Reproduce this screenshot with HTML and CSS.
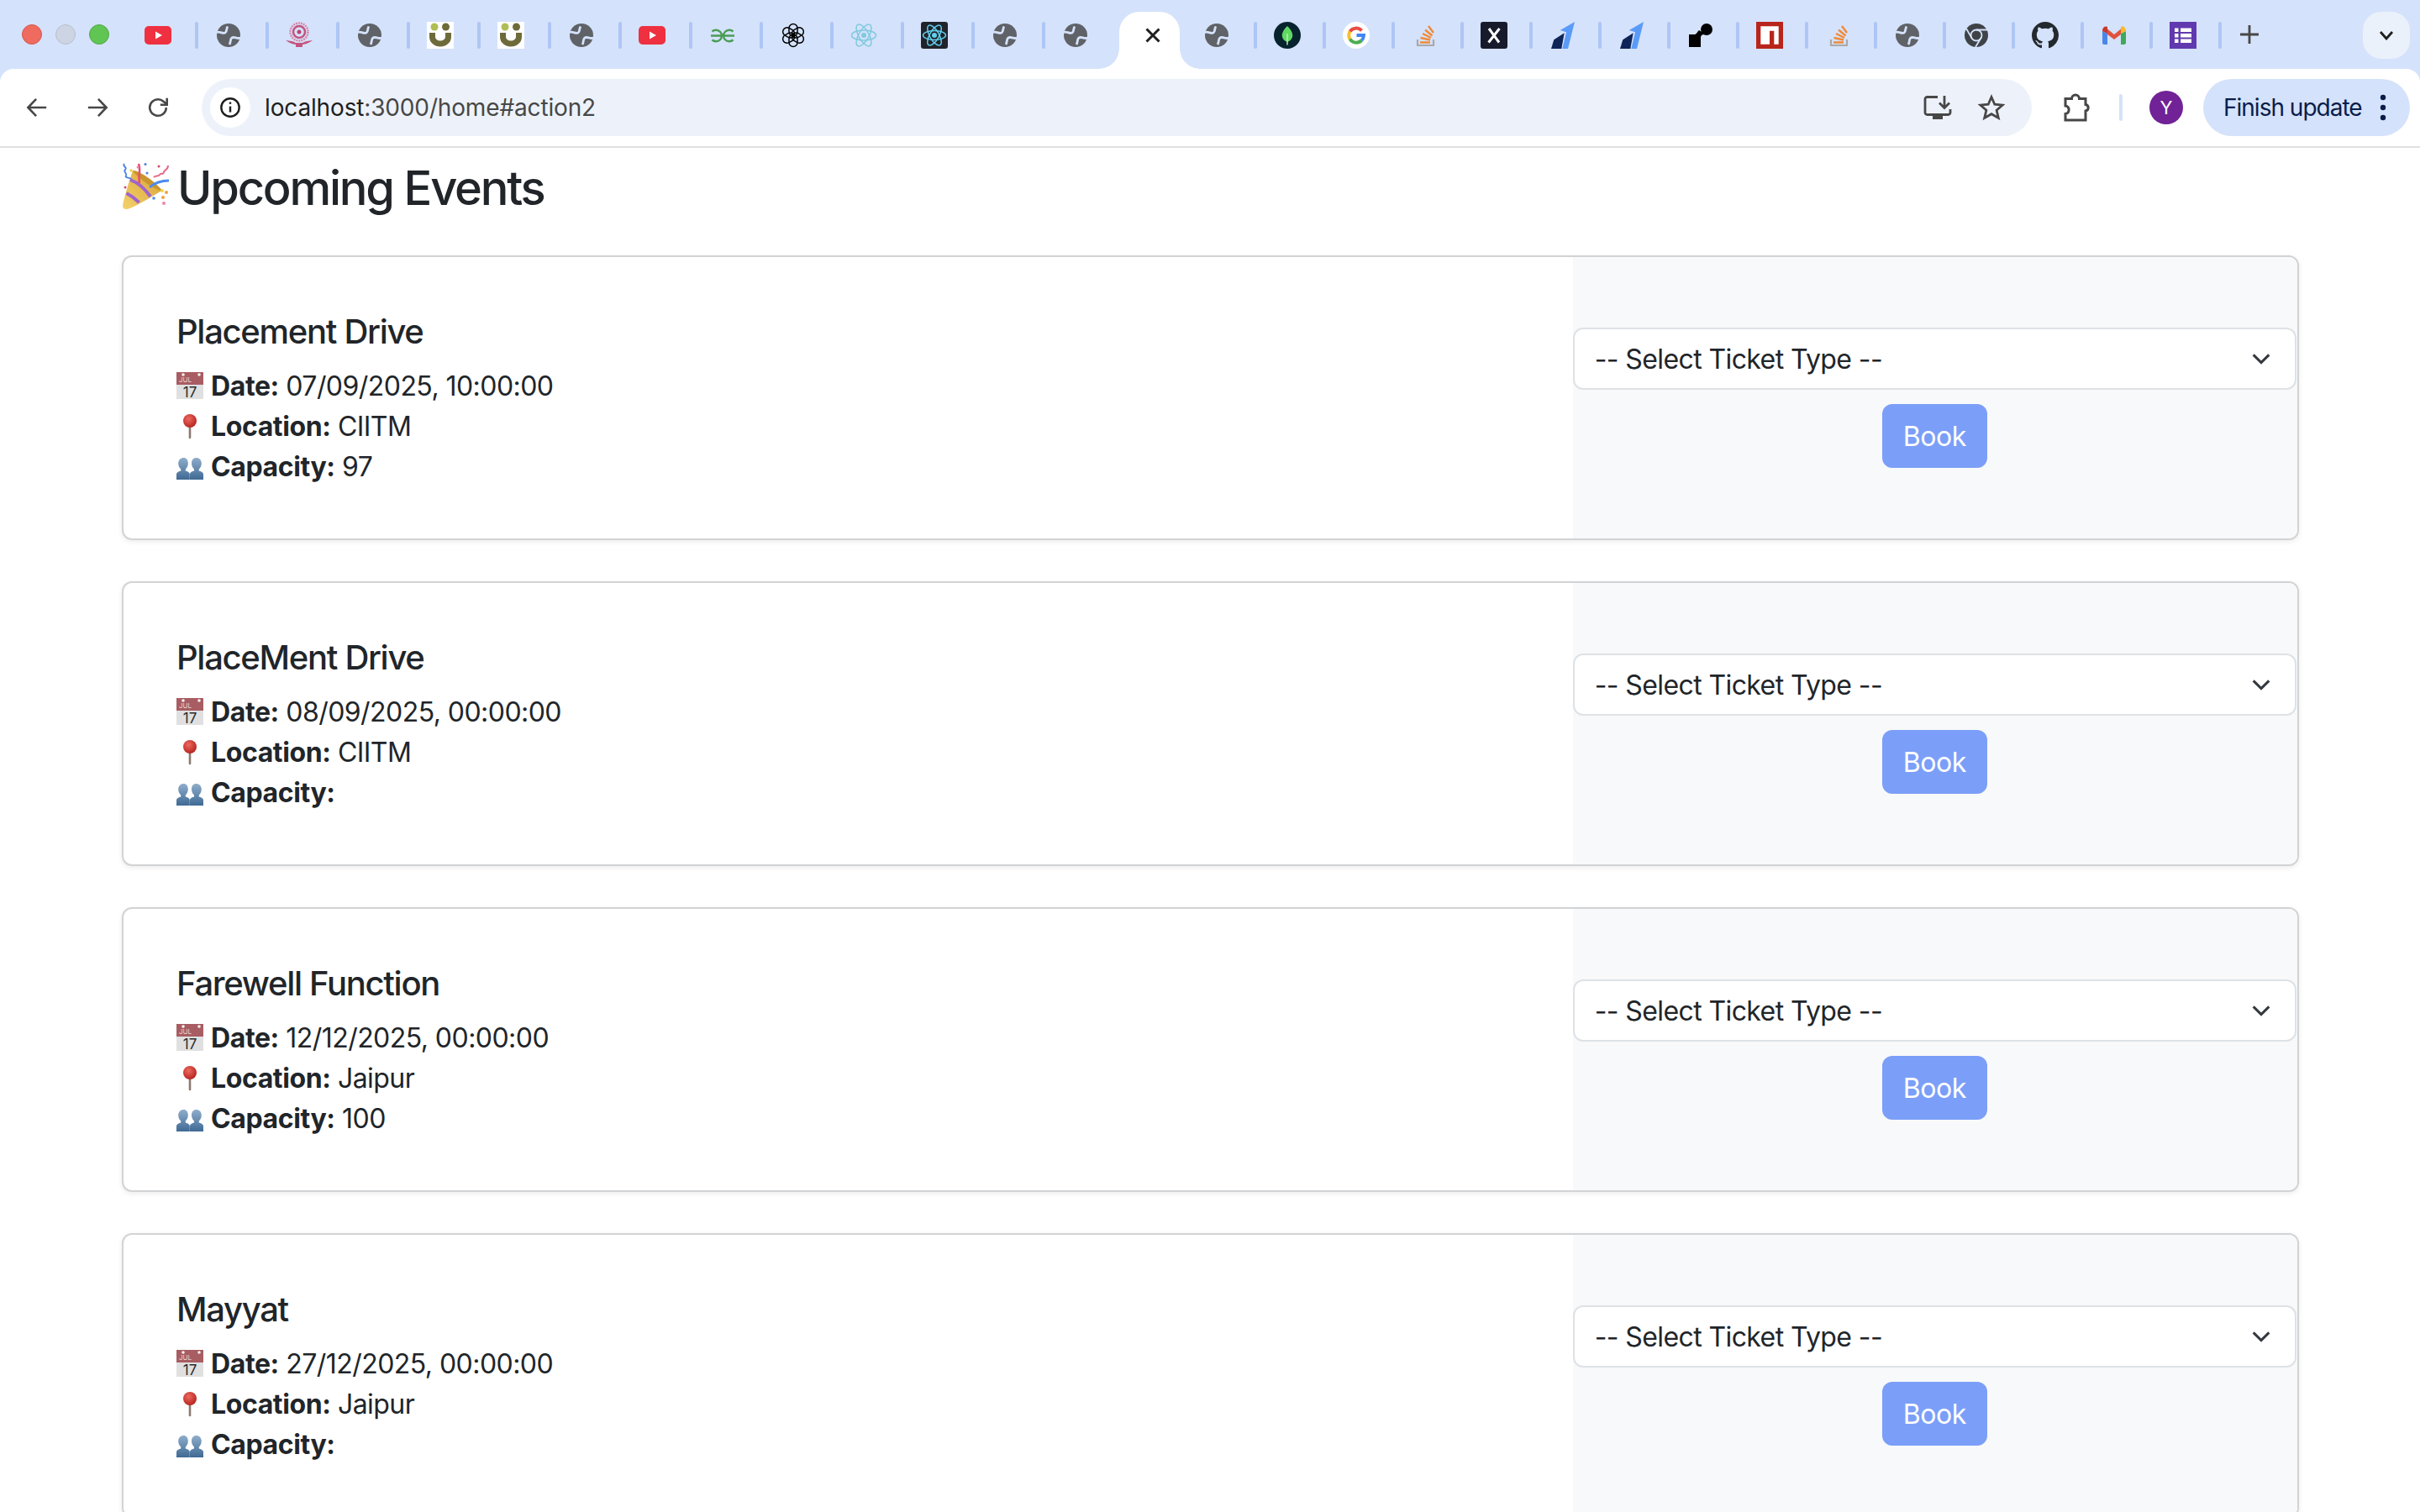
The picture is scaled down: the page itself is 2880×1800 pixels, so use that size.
FILE: index.html
```html
<!DOCTYPE html>
<html lang="en">
<head>
<meta charset="utf-8">
<title>Upcoming Events</title>
<link rel="stylesheet" href="styles.css">
</head>
<body>
<svg class="defs" width="0" height="0" aria-hidden="true">
  <defs>
    <linearGradient id="people" x1="0" y1="0" x2="0" y2="1"><stop offset="0" stop-color="#8fadcb"/><stop offset="1" stop-color="#3f6a94"/></linearGradient>
    <radialGradient id="ball" cx=".4" cy=".35" r=".7"><stop offset="0" stop-color="#ee6a60"/><stop offset="1" stop-color="#b3201c"/></radialGradient>
    <linearGradient id="gold" x1="0" y1="1" x2="1" y2="0"><stop offset="0" stop-color="#f3d36c"/><stop offset="1" stop-color="#d9a033"/></linearGradient>
  </defs>
  <symbol id="i-globe" viewBox="0 0 32 32"><circle cx="16" cy="16" r="14" fill="#5f6368"/><path d="M1 12.500C6 11 9 14.500 12 13c2.500-1.500 1-5 3-7.500" fill="none" stroke="#d5e2fb" stroke-width="2.800"/><path d="M31 19c-5 2-8-2-11 0-2.500 1.500-1 5-3 8" fill="none" stroke="#d5e2fb" stroke-width="2.800"/></symbol>
  <symbol id="i-yt" viewBox="0 0 32 32"><rect x="0" y="5" width="32" height="22" rx="5" fill="#ee3040"/><path d="M13 11.500l8 4.500-8 4.500z" fill="#fff"/></symbol>
  <symbol id="i-seal" viewBox="0 0 32 32"><circle cx="16" cy="12" r="10.500" fill="none" stroke="#d58aa8" stroke-width="2.500" stroke-dasharray="2 1"/><circle cx="16" cy="12" r="7" fill="none" stroke="#c4537f" stroke-width="2.500"/><circle cx="16" cy="12" r="2.500" fill="#b8446f"/><path d="M0 22c5 .5 9 1 12 3h8c3-2 7-2.500 12-3-4 3-8 4.500-12 5v3h-8v-3c-4-.5-8-2-12-5z" fill="#c4537f"/></symbol>
  <symbol id="i-u" viewBox="0 0 32 32"><rect width="32" height="32" fill="#fff"/><path d="M6.500 13v5a9.500 8 0 0 0 19 0v-5" fill="none" stroke="#6e6b3b" stroke-width="7"/><circle cx="9" cy="6" r="4.500" fill="#b0bd54"/><circle cx="22.500" cy="6" r="4.500" fill="#6e6b3b"/></symbol>
  <symbol id="i-gfg" viewBox="0 0 32 32" ><g fill="none" stroke="#4a9c55" stroke-width="2.400"><path d="M2 16.500H15.500M3.500 11.500A6.800 6.800 0 1 1 3.500 21.500"/><path d="M30 16.500H16.500M28.500 11.500A6.800 6.800 0 1 0 28.500 21.500"/></g></symbol>
  <symbol id="i-ai" viewBox="0 0 32 32"><g fill="none" stroke="#000" stroke-width="1.500"><rect x="11" y="2.500" width="10" height="14.500" rx="5"/><rect x="11" y="2.500" width="10" height="14.500" rx="5" transform="rotate(60 16 16)"/><rect x="11" y="2.500" width="10" height="14.500" rx="5" transform="rotate(120 16 16)"/><rect x="11" y="2.500" width="10" height="14.500" rx="5" transform="rotate(180 16 16)"/><rect x="11" y="2.500" width="10" height="14.500" rx="5" transform="rotate(240 16 16)"/><rect x="11" y="2.500" width="10" height="14.500" rx="5" transform="rotate(300 16 16)"/></g></symbol>
  <symbol id="i-react" viewBox="0 0 32 32"><g fill="none" stroke="#7fc9df" stroke-width="1.500"><ellipse cx="16" cy="16" rx="14.500" ry="6"/><ellipse cx="16" cy="16" rx="14.500" ry="6" transform="rotate(60 16 16)"/><ellipse cx="16" cy="16" rx="14.500" ry="6" transform="rotate(120 16 16)"/></g><circle cx="16" cy="16" r="3" fill="#7fc9df"/></symbol>
  <symbol id="i-reactd" viewBox="0 0 32 32"><rect width="32" height="32" rx="3" fill="#20232a"/><g fill="none" stroke="#61cfee" stroke-width="1.500"><ellipse cx="16" cy="16" rx="13.500" ry="5.500"/><ellipse cx="16" cy="16" rx="13.500" ry="5.500" transform="rotate(60 16 16)"/><ellipse cx="16" cy="16" rx="13.500" ry="5.500" transform="rotate(120 16 16)"/></g><circle cx="16" cy="16" r="3" fill="#61cfee"/></symbol>
  <symbol id="i-mongo" viewBox="0 0 32 32"><circle cx="16" cy="16" r="16" fill="#06232e"/><path d="M16 5c5 5 7 9 6 13-.7 3-3 5-6 6-3-1-5.300-3-6-6-1-4 1-8 6-13z" fill="#5fd862"/><path d="M16 14v13.500" stroke="#b6efae" stroke-width="1.500"/></symbol>
  <symbol id="i-g" viewBox="0 0 32 32"><circle cx="16" cy="16" r="16" fill="#fff"/><g fill="none" stroke-width="4"><path d="M22.500 10.500A9 9 0 0 0 8.500 11.500" stroke="#ea4c43"/><path d="M8.500 11.500A9 9 0 0 0 8.500 20.500" stroke="#f9c02c"/><path d="M8.500 20.500A9 9 0 0 0 22.500 22" stroke="#4cae50"/><path d="M22.500 22A9 9 0 0 0 25 16H16.500" stroke="#4285f4"/></g></symbol>
  <symbol id="i-so" viewBox="0 0 32 32"><path d="M7 21v7h19v-7" fill="none" stroke="#a9a9a9" stroke-width="2.200"/><g stroke="#ef8a3a" stroke-width="2.400"><path d="M10 24.500h12M10.500 19l11.500 2.500M13 14l10 5M16 9.500l8.500 7M20 5l6 8"/></g></symbol>
  <symbol id="i-x" viewBox="0 0 32 32"><rect width="32" height="32" rx="3" fill="#171a2b"/><path d="M10 8l12 16.500M22.500 8L9.500 24.500" stroke="#fff" stroke-width="3"/></symbol>
  <symbol id="i-arrow" viewBox="0 0 32 32"><path d="M12.700 10L30 0l-8 32h-6.700L20 12.300z" fill="#5b9bf8"/><path d="M2 32l3.300-10.700L17.700 13.300 14.300 32z" fill="#0f2557"/></symbol>
  <symbol id="i-blob" viewBox="0 0 32 32"><circle cx="23" cy="9" r="7"/><path d="M2 15h6c3 0 3-2 6-5l8 5c-3 0-6 0-6 4v11H2z"/></symbol>
  <symbol id="i-npm" viewBox="0 0 32 32"><rect width="32" height="32" fill="#b8251b"/><path d="M5.300 5.300h21.400v21.400H21.300V10.700h-5.300v16H5.300z" fill="#fff"/></symbol>
  <symbol id="i-chrome" viewBox="0 0 32 32"><circle cx="16" cy="16" r="14" fill="#3f4347"/><circle cx="16" cy="16" r="6.500" fill="none" stroke="#d5e2fb" stroke-width="1.800"/><path d="M16 9.500h13.500M10.500 19.300L4 8M21.500 19.300L15 30" stroke="#d5e2fb" stroke-width="1.800" fill="none"/></symbol>
  <symbol id="i-gh" viewBox="0 0 16 16"><path fill="#24292e" d="M8 0C3.580 0 0 3.580 0 8c0 3.540 2.290 6.530 5.470 7.590.4.070.55-.17.55-.38 0-.19-.01-.82-.01-1.490-2.010.37-2.530-.49-2.690-.94-.09-.23-.48-.94-.82-1.130-.28-.15-.68-.52-.01-.53.63-.01 1.080.58 1.230.82.72 1.210 1.870.87 2.330.66.07-.52.28-.87.51-1.070-1.780-.2-3.640-.89-3.640-3.950 0-.87.31-1.590.82-2.150-.08-.2-.36-1.020.08-2.120 0 0 .67-.21 2.200.82.64-.18 1.320-.27 2-.27.68 0 1.360.09 2 .27 1.530-1.040 2.200-.82 2.200-.82.44 1.100.16 1.920.08 2.120.51.56.82 1.270.82 2.150 0 3.070-1.870 3.750-3.650 3.950.29.25.54.73.54 1.480 0 1.070-.01 1.930-.01 2.200 0 .21.15.46.55.38A8.013 8.013 0 0 0 16 8c0-4.420-3.580-8-8-8z"/></symbol>
  <symbol id="i-gm" viewBox="0 0 32 32"><path d="M2 11v14a2 2 0 0 0 2 2h4V14z" fill="#4a86e8"/><path d="M30 11v14a2 2 0 0 1-2 2h-4V14z" fill="#40a85a"/><path d="M8 8.500L16 15l8-6.500V15l-8 6-8-6z" fill="#e0523f"/><path d="M2 11c0-5 4-6.500 6-5v8z" fill="#c5392f"/><path d="M30 11c0-5-4-6.500-6-5v8z" fill="#f5bb2a"/></symbol>
  <symbol id="i-forms" viewBox="0 0 32 32"><rect width="32" height="32" fill="#6139ae"/><path d="M6 7.500h4.500V12H6zM13 7.500h13V12H13zM6 14h4.500v4.500H6zM13 14h13v4.500H13zM6 20.500h4.500V25H6zM13 20.500h13V25H13z" fill="#fff"/></symbol>
  <symbol id="e-pin" viewBox="0 0 32 32"><path d="M16 14v16" stroke="#8b7a70" stroke-width="2.600" stroke-linecap="round"/><circle cx="16" cy="10" r="8" fill="url(#ball)"/></symbol>
  <symbol id="e-ppl" viewBox="0 0 32 32"><g fill="url(#people)"><path d="M8.500 6c3.300 0 5.300 2.700 5.300 6.500 0 3-1.300 5.700-3 6.700v2.300c3.500 1 5 2 5 4V32H0v-6.500c0-2 1.700-3 5.200-4v-2.300c-1.700-1-3-3.700-3-6.700C2.200 8.700 5 6 8.500 6z"/><path d="M23.500 6c3.500 0 6.300 2.700 6.300 6.500 0 3-1.300 5.700-3 6.700v2.300c3.500 1 5.200 2 5.200 4V32H16v-6.500c0-2 1.500-3 5-4v-2.300c-1.700-1-3-3.700-3-6.700 0-3.800 2.200-6.500 5.500-6.500z"/></g></symbol>
</svg>

<div class="browser">
  <div class="strip">
    <div class="lights"><span class="light red"></span><span class="light gray"></span><span class="light green"></span></div>
    <div class="tabs">
      <div class="tab"><svg class="fav"><use href="#i-yt"/></svg></div>
      <div class="tab"><svg class="fav"><use href="#i-globe"/></svg></div>
      <div class="tab"><svg class="fav"><use href="#i-seal"/></svg></div>
      <div class="tab"><svg class="fav"><use href="#i-globe"/></svg></div>
      <div class="tab"><svg class="fav"><use href="#i-u"/></svg></div>
      <div class="tab"><svg class="fav"><use href="#i-u"/></svg></div>
      <div class="tab"><svg class="fav"><use href="#i-globe"/></svg></div>
      <div class="tab"><svg class="fav"><use href="#i-yt"/></svg></div>
      <div class="tab"><svg class="fav"><use href="#i-gfg"/></svg></div>
      <div class="tab"><svg class="fav"><use href="#i-ai"/></svg></div>
      <div class="tab"><svg class="fav"><use href="#i-react"/></svg></div>
      <div class="tab"><svg class="fav"><use href="#i-reactd"/></svg></div>
      <div class="tab"><svg class="fav"><use href="#i-globe"/></svg></div>
      <div class="tab plain"><svg class="fav"><use href="#i-globe"/></svg></div>
      <div class="tab-active"><svg class="close" viewBox="0 0 16 16"><path d="M2 2l12 12M14 2L2 14"/></svg></div>
      <div class="tab after-active"><svg class="fav"><use href="#i-globe"/></svg></div>
      <div class="tab narrow"><svg class="fav"><use href="#i-mongo"/></svg></div>
      <div class="tab narrow"><svg class="fav"><use href="#i-g"/></svg></div>
      <div class="tab narrow"><svg class="fav"><use href="#i-so"/></svg></div>
      <div class="tab narrow"><svg class="fav"><use href="#i-x"/></svg></div>
      <div class="tab narrow"><svg class="fav"><use href="#i-arrow"/></svg></div>
      <div class="tab narrow"><svg class="fav"><use href="#i-arrow"/></svg></div>
      <div class="tab narrow"><svg class="fav"><use href="#i-blob"/></svg></div>
      <div class="tab narrow"><svg class="fav"><use href="#i-npm"/></svg></div>
      <div class="tab narrow"><svg class="fav"><use href="#i-so"/></svg></div>
      <div class="tab narrow"><svg class="fav"><use href="#i-globe"/></svg></div>
      <div class="tab narrow"><svg class="fav"><use href="#i-chrome"/></svg></div>
      <div class="tab narrow"><svg class="fav"><use href="#i-gh"/></svg></div>
      <div class="tab narrow"><svg class="fav"><use href="#i-gm"/></svg></div>
      <div class="tab narrow"><svg class="fav"><use href="#i-forms"/></svg></div>
      <svg class="plus" viewBox="0 0 22 22"><path d="M11 0v22M0 11h22"/></svg>
    </div>
    <div class="tab-menu"><svg class="tab-chevron" viewBox="0 0 18 12"><path d="M2 2l7 8 7-8"/></svg></div>
  </div>

  <div class="toolbar-wrap">
    <div class="toolbar">
      <div class="nav-btn"><svg class="glyph" viewBox="0 0 28 28"><path d="M26 14H3M13 3L2.500 14 13 25"/></svg></div>
      <div class="nav-btn"><svg class="glyph" viewBox="0 0 28 28"><path d="M2 14h23M15 3l10.500 11L15 25"/></svg></div>
      <div class="nav-btn"><svg class="glyph" viewBox="0 0 28 28"><path d="M24.500 14A10.500 10.500 0 1 1 21 6.200L25 9.500"/><path d="M25.500 2v8.500H17"/></svg></div>
      <div class="omnibox">
        <div class="site-info"><svg class="info" viewBox="0 0 28 28"><circle cx="14" cy="14" r="11.500"/><path d="M14 12.500V20"/><path class="info-dot" d="M14 7v2.500"/></svg></div>
        <div class="url"><span class="url-host">localhost</span>:3000/home#action2</div>
        <div class="omni-btn"><svg class="install" viewBox="0 0 34 30"><path d="M17 2.500H4.500a2.500 2.500 0 0 0-2.500 2.500v16a2.500 2.500 0 0 0 2.500 2.500h25a2.500 2.500 0 0 0 2.500-2.500V17"/><path d="M25 1v13M19 9.500l6 6 6-6"/><path class="solid" d="M11 24h12v5H11z"/></svg></div>
        <div class="omni-btn"><svg class="star" viewBox="0 0 32 32"><path d="M16 3.500l3.800 8.700 9.500.9-7.200 6.200 2.200 9.200L16 23.700l-8.300 4.800 2.200-9.200-7.200-6.200 9.500-.9z"/></svg></div>
      </div>
      <div class="ext-btn"><svg class="puzzle" viewBox="0 0 34 34"><path d="M3 6.500h7.500a4 4 0 1 1 9 0H27v7a3.800 3.800 0 0 1 0 7.500V32H3v-7.500a4.800 4.800 0 0 0 0-9.500z"/></svg></div>
      <span class="divider"></span>
      <div class="avatar">Y</div>
      <div class="update"><span>Finish update</span><svg class="dots" viewBox="0 0 8 32"><circle cx="4" cy="4" r="3.200"/><circle cx="4" cy="16" r="3.200"/><circle cx="4" cy="28" r="3.200"/></svg></div>
    </div>
  </div>
</div>

<main class="page">
  <h2 class="heading">
    <svg class="popper" viewBox="0 0 56 56">
      <path d="M13 9c6 1 26 13 35 24-7 3-17 11-36 20-6 3-11 3-11-2C2 43 8 24 13 9z" fill="url(#gold)"/>
      <path d="M5.500 36c4 2 10 6 15 11M10 20c8 3 17 10 24 20" fill="none" stroke="#a064cc" stroke-width="4"/>
      <path d="M13 9c6-1 27 13 35 24-4 1-30-14-35-24z" fill="#c9952f"/>
      <path d="M21 24C19 15 23 10 20 1" fill="none" stroke="#ea4a70" stroke-width="2.500"/>
      <path d="M33 29c7-6 14-8 23-8" fill="none" stroke="#4a8af0" stroke-width="2.800"/>
      <path d="M3 1c-3 3 4 4 1 7s3 4 1 7 4 2 6 4" fill="none" stroke="#4a7fe8" stroke-width="1.800"/>
      <path d="M38 17c3-3 5 0 7-3s4 1 5-3 5-2 5-8" fill="none" stroke="#e56a88" stroke-width="2"/>
      <circle cx="11" cy="9" r="1.800" fill="#f2d24c"/><circle cx="28" cy="1.500" r="1.500" fill="#4a7fe8"/><circle cx="30" cy="12" r="1.500" fill="#4a7fe8"/><circle cx="19" cy="5" r="1.500" fill="#e78ab0"/><circle cx="44" cy="4" r="1.500" fill="#d8466a"/><circle cx="48" cy="33" r="2" fill="#f2d24c"/><circle cx="53" cy="35" r="2" fill="#f0a040"/><circle cx="38" cy="42" r="1.800" fill="#4a8af0"/><circle cx="49" cy="41" r="2" fill="#f0a040"/><circle cx="50" cy="48" r="2" fill="#ea8aa8"/><circle cx="4" cy="29" r="1.500" fill="#d8466a"/>
    </svg>
    <span>Upcoming Events</span>
  </h2>

  <section class="card">
    <div class="card-info">
      <h5 class="event-title">Placement Drive</h5>
      <p class="row"><svg class="emoji" viewBox="0 0 32 32"><rect width="32" height="32" fill="#e0e0e0"/><rect width="32" height="15" fill="#a85d62"/><circle cx="8" cy="3" r="1.800" fill="#f4f0f0"/><circle cx="27" cy="3" r="1.800" fill="#f4f0f0"/><text x="3" y="12" class="cal-month">JUL</text><text x="16" y="29.500" class="cal-day">17</text></svg><strong>Date:</strong> 07/09/2025, 10:00:00</p>
      <p class="row"><svg class="emoji"><use href="#e-pin"/></svg><strong>Location:</strong> CIITM</p>
      <p class="row"><svg class="emoji"><use href="#e-ppl"/></svg><strong>Capacity:</strong> 97</p>
    </div>
    <div class="card-book">
      <div class="select"><span>-- Select Ticket Type --</span><svg class="select-chevron" viewBox="0 0 20 12"><path d="M2 2l8 8 8-8"/></svg></div>
      <div class="book">Book</div>
    </div>
  </section>

  <section class="card">
    <div class="card-info">
      <h5 class="event-title">PlaceMent Drive</h5>
      <p class="row"><svg class="emoji" viewBox="0 0 32 32"><rect width="32" height="32" fill="#e0e0e0"/><rect width="32" height="15" fill="#a85d62"/><circle cx="8" cy="3" r="1.800" fill="#f4f0f0"/><circle cx="27" cy="3" r="1.800" fill="#f4f0f0"/><text x="3" y="12" class="cal-month">JUL</text><text x="16" y="29.500" class="cal-day">17</text></svg><strong>Date:</strong> 08/09/2025, 00:00:00</p>
      <p class="row"><svg class="emoji"><use href="#e-pin"/></svg><strong>Location:</strong> CIITM</p>
      <p class="row"><svg class="emoji"><use href="#e-ppl"/></svg><strong>Capacity:</strong></p>
    </div>
    <div class="card-book">
      <div class="select"><span>-- Select Ticket Type --</span><svg class="select-chevron" viewBox="0 0 20 12"><path d="M2 2l8 8 8-8"/></svg></div>
      <div class="book">Book</div>
    </div>
  </section>

  <section class="card">
    <div class="card-info">
      <h5 class="event-title">Farewell Function</h5>
      <p class="row"><svg class="emoji" viewBox="0 0 32 32"><rect width="32" height="32" fill="#e0e0e0"/><rect width="32" height="15" fill="#a85d62"/><circle cx="8" cy="3" r="1.800" fill="#f4f0f0"/><circle cx="27" cy="3" r="1.800" fill="#f4f0f0"/><text x="3" y="12" class="cal-month">JUL</text><text x="16" y="29.500" class="cal-day">17</text></svg><strong>Date:</strong> 12/12/2025, 00:00:00</p>
      <p class="row"><svg class="emoji"><use href="#e-pin"/></svg><strong>Location:</strong> Jaipur</p>
      <p class="row"><svg class="emoji"><use href="#e-ppl"/></svg><strong>Capacity:</strong> 100</p>
    </div>
    <div class="card-book">
      <div class="select"><span>-- Select Ticket Type --</span><svg class="select-chevron" viewBox="0 0 20 12"><path d="M2 2l8 8 8-8"/></svg></div>
      <div class="book">Book</div>
    </div>
  </section>

  <section class="card">
    <div class="card-info">
      <h5 class="event-title">Mayyat</h5>
      <p class="row"><svg class="emoji" viewBox="0 0 32 32"><rect width="32" height="32" fill="#e0e0e0"/><rect width="32" height="15" fill="#a85d62"/><circle cx="8" cy="3" r="1.800" fill="#f4f0f0"/><circle cx="27" cy="3" r="1.800" fill="#f4f0f0"/><text x="3" y="12" class="cal-month">JUL</text><text x="16" y="29.500" class="cal-day">17</text></svg><strong>Date:</strong> 27/12/2025, 00:00:00</p>
      <p class="row"><svg class="emoji"><use href="#e-pin"/></svg><strong>Location:</strong> Jaipur</p>
      <p class="row"><svg class="emoji"><use href="#e-ppl"/></svg><strong>Capacity:</strong></p>
    </div>
    <div class="card-book">
      <div class="select"><span>-- Select Ticket Type --</span><svg class="select-chevron" viewBox="0 0 20 12"><path d="M2 2l8 8 8-8"/></svg></div>
      <div class="book">Book</div>
    </div>
  </section>
</main>
</body>
</html>
```
FILE: styles.css
```css
* { box-sizing: border-box; }
html, body { margin: 0; height: 100%; overflow: hidden; }
body { font-family: Inter, "Liberation Sans", sans-serif; color: #212529; background: #fff; }
.defs { display: block; height: 0; width: 0; }

/* browser chrome */
.browser { background: #d5e2fb; }
.strip { display: flex; align-items: flex-start; height: 82px; padding: 26px 12px 0 26px; }
.lights { display: flex; gap: 16px; margin-top: 3px; }
.light { width: 24px; height: 24px; border-radius: 50%; border: 1px solid; }
.red { background: #ef6b5f; border-color: #d4574c; }
.gray { background: #cdd5e4; border-color: #b9bfca; }
.green { background: #61c554; border-color: #4fa943; }
.tabs { display: flex; align-items: flex-start; margin-left: 22px; flex: 1; }
.tab { display: flex; width: 84px; height: 32px; padding-left: 20px; justify-content: space-between; flex: none; }
.tab::after { content: ""; width: 4px; height: 32px; border-radius: 2px; background: #adc6f5; }
.tab.plain { width: 52px; }
.tab.plain::after { background: transparent; }
.tab.after-active { width: 92px; padding-left: 28px; }
.tab.narrow { width: 82px; }
.fav { width: 32px; height: 32px; flex: none; display: block; }
.tab-active { position: relative; flex: none; width: 72px; height: 68px; margin: -12px 0 0 36px; background: #fff; border-radius: 24px 24px 0 0; display: flex; justify-content: center; padding: 18px 0 0 8px; }
.tab-active::before, .tab-active::after { content: ""; position: absolute; bottom: 0; width: 24px; height: 24px; background: radial-gradient(circle at 0 0, #d5e2fb 23.500px, #fff 24px); }
.tab-active::before { left: -24px; }
.tab-active::after { right: -24px; background: radial-gradient(circle at 100% 0, #d5e2fb 23.500px, #fff 24px); }
.close { width: 20px; height: 20px; fill: none; stroke: #1f1f1f; stroke-width: 2.400; }
.plus { width: 22px; height: 22px; margin: 4px 0 0 22px; fill: none; stroke: #474747; stroke-width: 2.800; flex: none; }
.tab-menu { width: 56px; height: 56px; margin-top: -12px; border-radius: 22px; background: #ebf1fb; display: flex; align-items: center; justify-content: center; flex: none; }
.tab-chevron { width: 18px; height: 12px; fill: none; stroke: #1f1f1f; stroke-width: 2.800; }

.toolbar-wrap { border-bottom: 2px solid #e0e0e0; background: #d5e2fb; }
.toolbar { display: flex; align-items: center; height: 92px; padding: 0 12px 0 8px; background: #fff; border-radius: 16px 16px 0 0; }
.nav-btn { width: 72px; height: 68px; display: flex; align-items: center; justify-content: center; flex: none; }
.glyph { width: 26px; height: 26px; fill: none; stroke: #474747; stroke-width: 2.800; }
.omnibox { flex: 1; display: flex; align-items: center; height: 68px; margin-left: 16px; padding: 0 16px 0 10px; border-radius: 34px; background: #edf2fa; }
.site-info { width: 48px; height: 48px; border-radius: 50%; background: #fff; display: flex; align-items: center; justify-content: center; flex: none; }
.info { width: 26px; height: 26px; fill: none; stroke: #1f1f1f; stroke-width: 2.600; }
.url { flex: 1; margin-left: 17px; font-size: 28px; letter-spacing: -.15px; color: #474747; }
.url-host { color: #1f1f1f; }
.omni-btn { width: 64px; display: flex; justify-content: center; align-items: center; flex: none; }
.install { width: 34px; height: 30px; fill: none; stroke: #474747; stroke-width: 2.800; }
.install .solid { fill: #474747; stroke: none; }
.star { width: 32px; height: 32px; fill: none; stroke: #474747; stroke-width: 2.800; }
.ext-btn { width: 68px; margin-left: 20px; display: flex; justify-content: center; flex: none; }
.puzzle { width: 34px; height: 34px; fill: none; stroke: #474747; stroke-width: 3; }
.divider { width: 4px; height: 32px; margin-left: 16px; border-radius: 2px; background: #d5e2fb; flex: none; }
.avatar { width: 40px; height: 40px; margin-left: 32px; border-radius: 50%; background: #702296; color: #fff; font-size: 22px; display: flex; align-items: center; justify-content: center; flex: none; }
.update { width: 246px; height: 68px; margin-left: 24px; padding: 0 28px 0 24px; border-radius: 34px; background: #d5e2fb; color: #0a1d4a; font-size: 28px; letter-spacing: -1px; display: flex; align-items: center; justify-content: space-between; flex: none; }
.dots { width: 8px; height: 32px; fill: #0a1d4a; }

/* page */
.page { padding: 15px 144px 0 145px; }
.heading { display: flex; align-items: flex-start; gap: 10px; margin: 0 0 46px; font-size: 56px; line-height: 67px; font-weight: 450; letter-spacing: -2.2px; color: #212529; }
.popper { width: 56px; height: 56px; margin-top: 3px; flex: none; }
.card { display: grid; grid-template-columns: 2fr 1fr; margin-bottom: 49px; border: 2px solid #d2d3d4; border-radius: 12px; box-shadow: 0 2px 6px rgba(0, 0, 0, .08); overflow: hidden; background: #fff; }
.card-info { padding: 65px 62px 61px 63px; }
.event-title { margin: 0 0 17px; font-size: 40px; line-height: 48px; font-weight: 450; letter-spacing: -1.3px; color: #212529; }
.row { margin: 0; font-size: 32px; line-height: 48px; letter-spacing: -.55px; color: #212529; }
.row strong { font-weight: 700; letter-spacing: -.4px; }
.emoji { width: 32px; height: 32px; margin-right: 9px; vertical-align: -4px; }
.cal-month { font: 8px Inter, sans-serif; letter-spacing: 0; fill: #e8d5d5; }
.cal-day { font: 17px Inter, sans-serif; letter-spacing: 0; fill: #2c2c2c; text-anchor: middle; }
.card-book { display: flex; flex-direction: column; align-items: center; justify-content: center; background: #f8f9fa; padding: 0 1px 0 0; }
.select { width: 100%; height: 74px; padding: 0 12px 0 24px; display: flex; align-items: center; justify-content: space-between; background: #fff; border: 2px solid #dee2e6; border-radius: 12px; font-size: 32px; letter-spacing: -.6px; color: #212529; }
.select-chevron { width: 24px; height: 14px; margin-right: 16px; fill: none; stroke: #343a40; stroke-width: 2.600; }
.book { width: 125px; height: 76px; margin-top: 17px; display: flex; align-items: center; justify-content: center; border-radius: 12px; background: #7b9ff8; color: #fff; font-size: 32px; letter-spacing: -.4px; }
```
